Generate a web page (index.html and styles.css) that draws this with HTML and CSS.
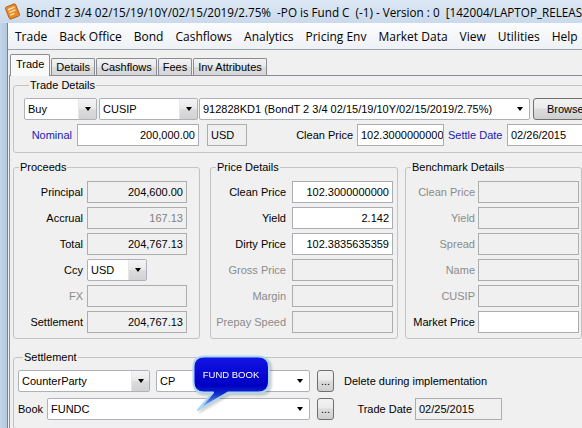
FILE: index.html
```html
<!DOCTYPE html>
<html>
<head>
<meta charset="utf-8">
<title>BondT</title>
<link rel="stylesheet" href="styles.css">
</head>
<body>
<div class="win">
  <div class="titlebar">
    <svg class="appicon" width="17" height="17" viewBox="0 0 17 17">
      <g transform="rotate(-22 8.5 8.5)">
        <rect x="3" y="2" width="11" height="13" rx="1.5" fill="#e8892a" stroke="#a85a18" stroke-width="0.8"/>
        <rect x="5" y="4.5" width="7" height="1.4" fill="#fde3b4"/>
        <rect x="5" y="7.4" width="7" height="1.4" fill="#fde3b4"/>
        <rect x="5" y="10.3" width="4.5" height="1.4" fill="#fde3b4"/>
      </g>
    </svg>
    <span class="title">BondT 2 3/4 02/15/19/10Y/02/15/2019/2.75%&nbsp; -PO is Fund C&nbsp; (-1) - Version : 0&nbsp; [142004/LAPTOP_RELEASE]</span>
  </div>
  <div class="main">
    <div class="frame-left"></div>
    <div class="client">
      <div class="menubar">
        <span class="mi">Trade</span>
        <span class="mi">Back Office</span>
        <span class="mi">Bond</span>
        <span class="mi">Cashflows</span>
        <span class="mi">Analytics</span>
        <span class="mi">Pricing Env</span>
        <span class="mi">Market Data</span>
        <span class="mi">View</span>
        <span class="mi">Utilities</span>
        <span class="mi">Help</span>
      </div>
      <div class="tabs">
        <div class="tab sel">Trade</div>
        <div class="tab">Details</div>
        <div class="tab">Cashflows</div>
        <div class="tab">Fees</div>
        <div class="tab">Inv Attributes</div>
      </div>
      <div class="panel">
        <fieldset class="group g-trade">
          <legend>Trade Details</legend>
          <div class="row r1">
            <div class="combo w-buy"><span class="v">Buy</span><span class="dd btnlike"><i class="arrow"></i></span></div>
            <div class="combo w-cusip"><span class="v">CUSIP</span><span class="dd btnlike"><i class="arrow"></i></span></div>
            <div class="combo w-sec"><span class="v">912828KD1 (BondT 2 3/4 02/15/19/10Y/02/15/2019/2.75%)</span><span class="dd"><i class="arrow"></i></span></div>
            <div class="btn w-browse">Browse</div>
          </div>
          <div class="row r2">
            <span class="lbl blue w-lnom">Nominal</span>
            <div class="box r w-nom">200,000.00</div>
            <div class="box dis w-usd">USD</div>
            <span class="lbl w-lclean">Clean Price</span>
            <div class="box w-clean">102.3000000000</div>
            <span class="lbl blue left w-lsettle">Settle Date</span>
            <div class="box w-settle">02/26/2015</div>
          </div>
        </fieldset>

        <div class="cols">
          <fieldset class="group g-proc">
            <legend>Proceeds</legend>
            <div class="form f-proc">
              <span class="lbl">Principal</span><div class="box r dis">204,600.00</div>
              <span class="lbl">Accrual</span><div class="box r dis grey">167.13</div>
              <span class="lbl">Total</span><div class="box r dis">204,767.13</div>
              <span class="lbl">Ccy</span><div class="combo w-ccy"><span class="v">USD</span><span class="dd btnlike"><i class="arrow"></i></span></div>
              <span class="lbl grey">FX</span><div class="box r dis"></div>
              <span class="lbl">Settlement</span><div class="box r dis">204,767.13</div>
            </div>
          </fieldset>

          <fieldset class="group g-price">
            <legend>Price Details</legend>
            <div class="form f-price">
              <span class="lbl">Clean Price</span><div class="box r">102.3000000000</div>
              <span class="lbl">Yield</span><div class="box r">2.142</div>
              <span class="lbl">Dirty Price</span><div class="box r">102.3835635359</div>
              <span class="lbl grey">Gross Price</span><div class="box r dis"></div>
              <span class="lbl grey">Margin</span><div class="box r dis"></div>
              <span class="lbl grey">Prepay Speed</span><div class="box r dis"></div>
            </div>
          </fieldset>

          <fieldset class="group g-bench">
            <legend>Benchmark Details</legend>
            <div class="form f-bench">
              <span class="lbl grey">Clean Price</span><div class="box r dis"></div>
              <span class="lbl grey">Yield</span><div class="box r dis"></div>
              <span class="lbl grey">Spread</span><div class="box r dis"></div>
              <span class="lbl grey">Name</span><div class="box r dis"></div>
              <span class="lbl grey">CUSIP</span><div class="box r dis"></div>
              <span class="lbl">Market Price</span><div class="box r"></div>
            </div>
          </fieldset>
        </div>

        <fieldset class="group g-settle">
          <legend>Settlement</legend>
          <div class="row s1">
            <div class="combo w-cp"><span class="v">CounterParty</span><span class="dd btnlike"><i class="arrow"></i></span></div>
            <div class="combo w-cpval"><span class="v">CP</span><span class="dd"><i class="arrow"></i></span></div>
            <div class="btn ell">...</div>
            <span class="lbl left w-del">Delete during implementation</span>
            <div class="btn ell"></div>
          </div>
          <div class="row s2">
            <span class="lbl left w-lbook">Book</span>
            <div class="combo w-book"><span class="v">FUNDC</span><span class="dd"><i class="arrow"></i></span></div>
            <div class="btn ell">...</div>
            <span class="lbl w-ltrade">Trade Date</span>
            <div class="box dis w-tdate">02/25/2015</div>
          </div>
        </fieldset>
      </div>
    </div>
  </div>

  <div class="tip">
    <svg width="82" height="60" viewBox="0 0 82 60">
      <defs>
        <linearGradient id="tipg" x1="0" y1="0" x2="0" y2="1">
          <stop offset="0" stop-color="#1414e6"/>
          <stop offset="0.55" stop-color="#0000c4"/>
          <stop offset="0.7" stop-color="#1030c8"/>
          <stop offset="1" stop-color="#a8d2f2"/>
        </linearGradient>
      </defs>
      <path d="M12,1.5 H66 Q77,1.5 77,12 V27 Q77,37.5 66,37.5 H36 L6,55 L21,37.5 H12 Q1.5,37.5 1.5,27 V12 Q1.5,1.5 12,1.5 Z" fill="url(#tipg)" stroke="#a9d6f6" stroke-width="2" stroke-linejoin="round"/>
      <text x="39" y="22.5" text-anchor="middle" class="tiptext">FUND BOOK</text>
    </svg>
  </div>
</div>
</body>
</html>
```

FILE: styles.css
```css
* { box-sizing: border-box; }
html, body { margin: 0; padding: 0; }
body {
  width: 582px;
  height: 428px;
  overflow: hidden;
  background: #f0f0f0;
  font-family: "Liberation Sans", Arial, sans-serif;
  font-size: 11px;
  color: #000;
}
.win {
  position: relative;
  width: 660px;
  height: 428px;
  display: flex;
  flex-direction: column;
  background: #c4d5e8;
}

/* title bar */
.titlebar {
  flex: none;
  height: 23px;
  display: flex;
  align-items: center;
  gap: 5px;
  padding-left: 4px;
  background: linear-gradient(#dde8f4, #cad9eb);
}
.appicon { flex: none; }
.title {
  font-family: "Open Sans", "Noto Sans", sans-serif;
  font-size: 11.7px;
  white-space: nowrap;
  color: #000;
}

.main { flex: 1; display: flex; min-height: 0; }
.frame-left {
  flex: none;
  width: 7px;
  background: linear-gradient(90deg, #c3d5ea, #b3c7de);
}
.client {
  flex: 1;
  display: flex;
  flex-direction: column;
  border-left: 1px solid #71849a;
  background: #f0f0f0;
}

/* menu */
.menubar {
  flex: none;
  height: 27px;
  display: flex;
  align-items: center;
  border-bottom: 1px solid #9ea4ab;
  background: linear-gradient(#fbfcfd, #eef1f5);
  font-family: "Open Sans", "Noto Sans", sans-serif;
  font-size: 12px;
  white-space: nowrap;
}
.mi { padding: 0 6px; }
.mi:first-child { padding-left: 7px; }

/* tabs */
.tabs {
  flex: none;
  height: 25px;
  display: flex;
  align-items: flex-end;
  padding-left: 2px;
}
.tab {
  height: 17px;
  padding: 0 4px;
  margin-right: 1px;
  border: 1px solid #898c95;
  border-bottom: none;
  border-radius: 2px 2px 0 0;
  background: linear-gradient(#f3f3f3, #e8e8e8 50%, #dcdcdc 50%, #d6d6d6);
  line-height: 16px;
  white-space: nowrap;
}
.tab.sel {
  height: 22px;
  padding: 0 5px;
  margin-bottom: -1px;
  background: #f9f9f9;
  line-height: 19px;
  position: relative;
  z-index: 1;
}

/* panel */
.panel {
  flex: 1;
  margin-left: 1px;
  border-top: 1px solid #898c95;
  border-left: 1px solid #898c95;
  padding: 2px 0 0 3px;
  background: #f0f0f0;
}

.group {
  margin: 0;
  padding: 0;
  min-width: 0;
  border: 1px solid #c3c3c3;
  border-radius: 3px;
}
.group > legend {
  margin-left: 5px;
  padding: 0 1px;
  line-height: 14px;
  font-size: 11px;
}

.row { display: flex; align-items: center; height: 22px; }

.group.g-trade { padding: 6px 0 6px 10px; }
.r2 { margin-top: 4px; }
.w-buy { width: 73px; }
.w-cusip { width: 99px; margin-left: 2px; }
.w-sec { width: 331px; margin-left: 1px; }
.btn.w-browse { width: 75px; margin-left: 3px; justify-content: flex-start; padding-left: 13px; }
.w-lnom { width: 53px; padding-right: 5px; }
.w-nom { width: 122px; }
.w-usd { width: 40px; margin-left: 8px; }
.w-lclean { width: 110px; padding-right: 4px; }
.w-clean { width: 87px; }
.w-lsettle { width: 63px; padding-left: 4px; }
.w-settle { width: 100px; }

.cols { display: flex; margin-top: 7px; }
.group.g-proc { width: 187px; padding: 7px 0 5px 0; }
.group.g-price { width: 188px; margin-left: 10px; padding: 7px 0 5px 0; }
.group.g-bench { width: 177px; margin-left: 7px; padding: 7px 0 5px 0; }

.form {
  display: grid;
  grid-auto-rows: 22px;
  row-gap: 4px;
  align-items: center;
}
.f-proc { grid-template-columns: 69px 100px; column-gap: 4px; }
.f-price { grid-template-columns: 75px 101px; column-gap: 6px; }
.f-bench { grid-template-columns: 69px 101px; column-gap: 3px; }
.w-ccy { width: 60px; }

.group.g-settle { margin-top: 11px; padding: 6px 0 8px 4px; }
.s2 { margin-top: 6px; }
.w-cp { width: 132px; }
.w-cpval { width: 154px; margin-left: 6px; }
.btn.ell { width: 17px; margin-left: 7px; }
.w-del { width: 243px; padding-left: 10px; }
.w-lbook { width: 29px; }
.w-book { width: 263px; }
.w-ltrade { width: 81px; padding-right: 3px; }
.w-tdate { width: 87px; }

/* controls */
.lbl { white-space: nowrap; text-align: right; }
.lbl.left { text-align: left; }
.lbl.blue { color: #2020b2; }
.lbl.grey { color: #8b8b8b; }

.box {
  height: 22px;
  display: flex;
  align-items: center;
  padding: 0 3px;
  border: 1px solid #abadb3;
  background: #fff;
  white-space: nowrap;
  overflow: hidden;
}
.box.r { justify-content: flex-end; }
.box.dis { background: #f0f0f0; border-color: #adadad; }
.box.grey { color: #7f7f7f; }

.combo {
  height: 22px;
  display: flex;
  align-items: stretch;
  border: 1px solid #adb2b8;
  background: #fff;
  border-radius: 2px;
}
.combo .v {
  flex: 1;
  display: flex;
  align-items: center;
  padding-left: 3px;
  white-space: nowrap;
  overflow: hidden;
}
.combo .dd {
  flex: none;
  width: 18px;
  display: flex;
  align-items: center;
  justify-content: center;
}
.combo .dd.btnlike {
  background: linear-gradient(#f4f4f4, #e9e9e9 50%, #dcdcdc 50%, #d2d2d2);
  border-left: 1px solid #e6e6e6;
}
.arrow {
  width: 0;
  height: 0;
  border-left: 3.5px solid transparent;
  border-right: 3.5px solid transparent;
  border-top: 4px solid #000;
}

.btn {
  height: 22px;
  display: flex;
  align-items: center;
  justify-content: center;
  border: 1px solid #707070;
  border-radius: 3px;
  background: linear-gradient(#f2f2f2, #ebebeb 45%, #dddddd 50%, #cfcfcf);
  white-space: nowrap;
  flex: none;
}

/* balloon tooltip */
.tip {
  position: absolute;
  left: 192px;
  top: 355px;
  width: 82px;
  height: 60px;
  filter: drop-shadow(2px 2px 1px rgba(0, 0, 0, 0.18));
}
.tip svg { display: block; }
.tiptext {
  font-family: "Liberation Sans", Arial, sans-serif;
  font-size: 9.5px;
  fill: #ffffff;
}
```
